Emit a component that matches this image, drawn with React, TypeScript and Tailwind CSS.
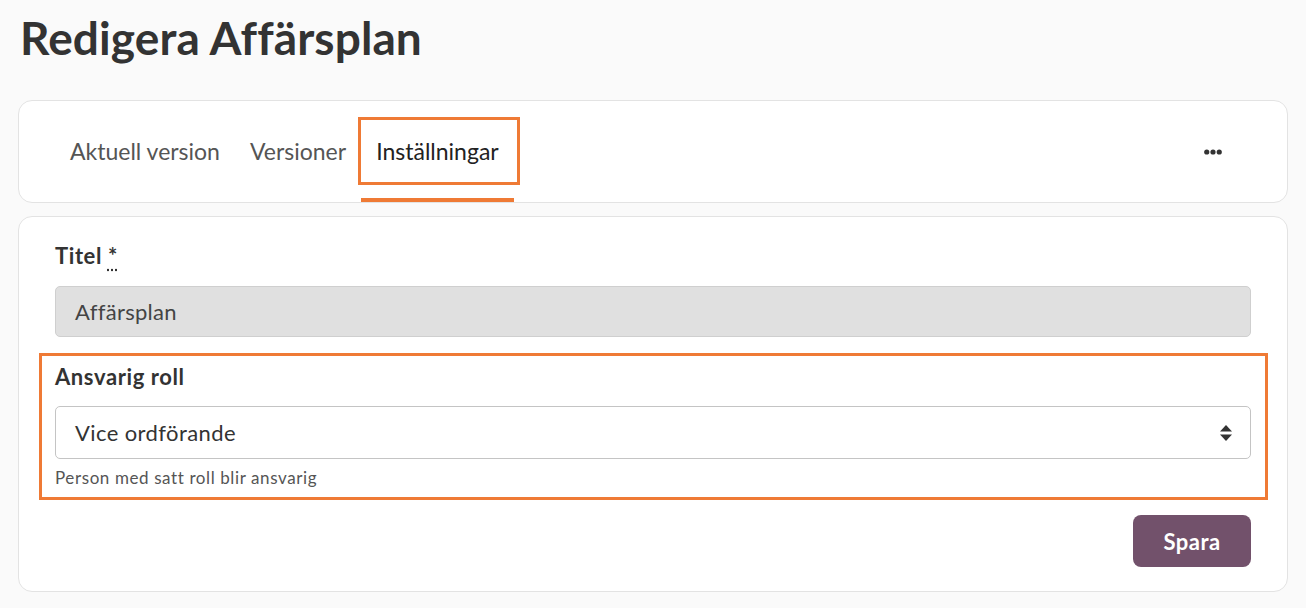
import React from "react";

const font = { fontFamily: "Lato, 'Noto Sans', sans-serif" };

function Dots() {
  return (
    <svg width="18" height="6" viewBox="0 0 18 6" className="text-[#333]">
      <circle cx="2.75" cy="3" r="2.6" fill="currentColor" />
      <circle cx="9" cy="3" r="2.6" fill="currentColor" />
      <circle cx="15.25" cy="3" r="2.6" fill="currentColor" />
    </svg>
  );
}

function SortArrows() {
  return (
    <svg width="12" height="16" viewBox="0 0 12 16" className="text-[#333]">
      <path d="M6 0 L12 6.5 H0 Z" fill="currentColor" />
      <path d="M0 9.5 H12 L6 16 Z" fill="currentColor" />
    </svg>
  );
}

export default function App() {
  return (
    <div className="min-h-[608px] bg-[#fafafa] px-[18px]" style={font}>
      <h1 className="pt-[10px] pl-[2px] text-[46px] leading-[55px] font-bold tracking-[0.1px] text-[#333]">
        Redigera Affärsplan
      </h1>

      <div className="mt-[35px] h-[103px] rounded-[14px] border border-[#e3e3e3] bg-white flex items-stretch pl-9">
        <div className="px-[15px] flex items-center border-y-4 border-transparent text-[23px] text-[#555]">
          Aktuell version
        </div>
        <div className="px-[15px] flex items-center border-y-4 border-transparent text-[23px] text-[#555]">
          Versioner
        </div>
        <div className="relative px-[15px] flex items-center border-t-4 border-t-transparent border-b-4 border-b-[#ef7a35] text-[23px] text-[#222]">
          Inställningar
          <div className="pointer-events-none absolute left-[-3px] right-[-6px] top-[12px] bottom-[13px] border-[3px] border-[#ef7a35]" />
        </div>
        <div className="ml-auto mr-[65px] flex items-center">
          <Dots />
        </div>
      </div>

      <div className="mt-[13px] rounded-[14px] border border-[#e3e3e3] bg-white px-9 pt-[26px] pb-[24px] flex flex-col">
        <label className="text-[22px] leading-[26px] font-bold tracking-[0.6px] text-[#333]">
          Titel{" "}
          <abbr className="no-underline" title="obligatoriskt">
            <span className="underline decoration-dotted underline-offset-[5px]">*</span>
          </abbr>
        </label>
        <div className="mt-[17px] h-[51px] rounded-[5px] border border-[#cfcfcf] bg-[#e0e0e0] px-[19px] flex items-center text-[22px] tracking-[0.3px] text-[#444]">
          Affärsplan
        </div>

        <div className="relative mt-[27px] flex flex-col">
          <div className="pointer-events-none absolute left-[-16px] right-[-17px] top-[-11px] bottom-[-12px] border-[3px] border-[#ef7a35]" />
          <label className="text-[22px] leading-[26px] font-bold tracking-[0.6px] text-[#333]">Ansvarig roll</label>
          <div className="mt-[16px] h-[53px] rounded-[5px] border border-[#c4c4c4] bg-white pl-[19px] pr-[18px] flex items-center justify-between text-[22px] tracking-[0.4px] text-[#333]">
            <span>Vice ordförande</span>
            <SortArrows />
          </div>
          <div className="mt-[9px] text-[17px] leading-[20px] tracking-[0.6px] text-[#555]">
            Person med satt roll blir ansvarig
          </div>
        </div>

        <button className="mt-[27px] self-end h-[52px] w-[118px] rounded-[8px] bg-[#72516b] text-white text-[22px] tracking-[0.5px] font-bold">
          Spara
        </button>
      </div>
    </div>
  );
}
